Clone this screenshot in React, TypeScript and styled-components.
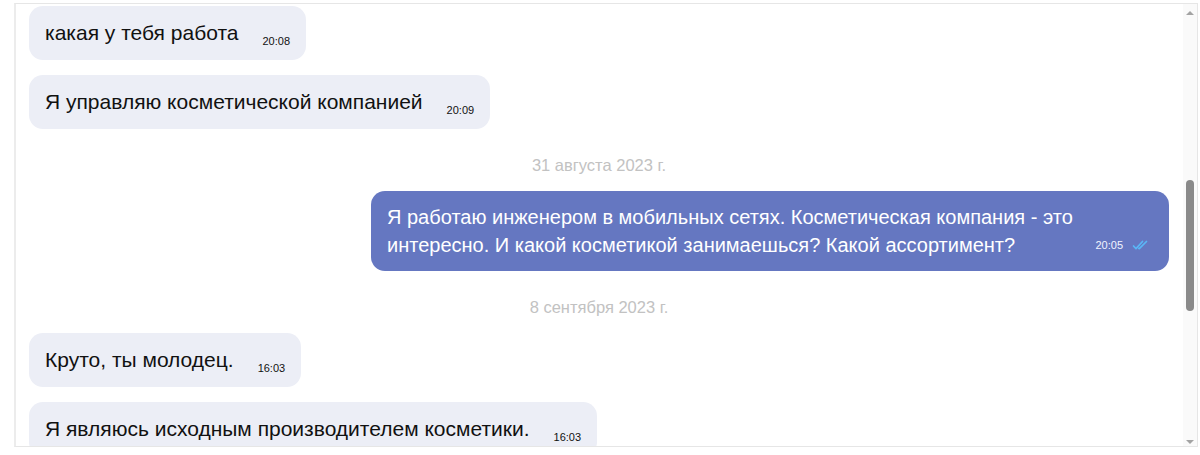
import React from "react";
import styled, { createGlobalStyle } from "styled-components";

const Global = createGlobalStyle`
  html, body { margin: 0; padding: 0; background: #ffffff; }
  body { font-family: "Liberation Sans", Arial, sans-serif; }
`;

const Page = styled.div`
  padding: 3px 2px 0 14px;
  height: 455px;
  box-sizing: border-box;
`;

const Frame = styled.div`
  display: flex;
  height: 444px;
  border: 1px solid #e6e6e6;
  border-left: 2px solid #ececec;
  box-sizing: border-box;
  background: #fff;
`;

const Messages = styled.div`
  flex: 1;
  min-width: 0;
  overflow: hidden;
  display: flex;
  flex-direction: column;
  gap: 15px;
  padding: 2px 14px 0 13px;
`;

const Row = styled.div<{ $out?: boolean }>`
  display: flex;
  justify-content: ${(p) => (p.$out ? "flex-end" : "flex-start")};
  flex-shrink: 0;
`;

const Bubble = styled.div<{ $out?: boolean }>`
  max-width: 70%;
  box-sizing: border-box;
  padding: ${(p) => (p.$out ? "12px 16px" : "13px 16px")};
  border-radius: 14px;
  background: ${(p) => (p.$out ? "#6577c1" : "#eceef6")};
  color: ${(p) => (p.$out ? "#ffffff" : "#111111")};
  font-size: ${(p) => (p.$out ? "20px" : "21px")};
  line-height: 28px;
`;

const Time = styled.span`
  display: inline-block;
  margin-left: 24px;
  font-size: 11px;
  line-height: 11px;
  vertical-align: -5px;
  color: #111111;
`;

const OutMeta = styled.span`
  float: right;
  display: inline-flex;
  align-items: center;
  gap: 9px;
  height: 28px;
  margin-left: 24px;
  margin-right: 3px;
  font-size: 11px;
  color: #f2f4ff;
`;

const DateLabel = styled.div`
  flex-shrink: 0;
  text-align: center;
  color: #c2c2c2;
  font-size: 16.5px;
  line-height: 20px;
  padding: 11px 0 1px;
`;

const Track = styled.div`
  width: 14px;
  flex-shrink: 0;
  background: #fafafa;
  position: relative;
  display: flex;
  flex-direction: column;
  align-items: center;
`;

const Arrow = styled.div<{ $down?: boolean }>`
  width: 0;
  height: 0;
  border-left: 4px solid transparent;
  border-right: 4px solid transparent;
  ${(p) =>
    p.$down
      ? "border-top: 4px solid #a3a3a3; margin-top: auto; margin-bottom: 2px;"
      : "border-bottom: 4px solid #a3a3a3; margin-top: 7px;"}
`;

const Thumb = styled.div`
  position: absolute;
  left: 3px;
  top: 176px;
  width: 8px;
  height: 131px;
  border-radius: 4px;
  background: #8a8a8a;
`;

const Ticks = () => (
  <svg width="18" height="10" viewBox="0 0 18 10" fill="none">
    <path d="M1.5 6 L4 8.6 L10.5 1.5" stroke="#5ab6f6" strokeWidth="1.7" strokeLinecap="round" strokeLinejoin="round" />
    <path d="M6.8 8.4 L7.3 8.6 L14.5 1.5" stroke="#5ab6f6" strokeWidth="1.7" strokeLinecap="round" strokeLinejoin="round" />
  </svg>
);

type Item =
  | { kind: "in"; text: string; time: string }
  | { kind: "out"; text: string; time: string }
  | { kind: "date"; text: string };

const items: Item[] = [
  { kind: "in", text: "какая у тебя работа", time: "20:08" },
  { kind: "in", text: "Я управляю косметической компанией", time: "20:09" },
  { kind: "date", text: "31 августа 2023 г." },
  {
    kind: "out",
    text:
      "Я работаю инженером в мобильных сетях. Косметическая компания - это интересно. И какой косметикой занимаешься? Какой ассортимент?",
    time: "20:05",
  },
  { kind: "date", text: "8 сентября 2023 г." },
  { kind: "in", text: "Круто, ты молодец.", time: "16:03" },
  { kind: "in", text: "Я являюсь исходным производителем косметики.", time: "16:03" },
];

export default function App() {
  return (
    <>
      <Global />
      <Page>
        <Frame>
          <Messages>
            {items.map((it, i) => {
              if (it.kind === "date") return <DateLabel key={i}>{it.text}</DateLabel>;
              if (it.kind === "out")
                return (
                  <Row key={i} $out>
                    <Bubble $out>
                      {it.text}
                      <OutMeta>
                        <span>{it.time}</span>
                        <Ticks />
                      </OutMeta>
                    </Bubble>
                  </Row>
                );
              return (
                <Row key={i}>
                  <Bubble>
                    {it.text}
                    <Time>{it.time}</Time>
                  </Bubble>
                </Row>
              );
            })}
          </Messages>
          <Track>
            <Arrow />
            <Thumb />
            <Arrow $down />
          </Track>
        </Frame>
      </Page>
    </>
  );
}
